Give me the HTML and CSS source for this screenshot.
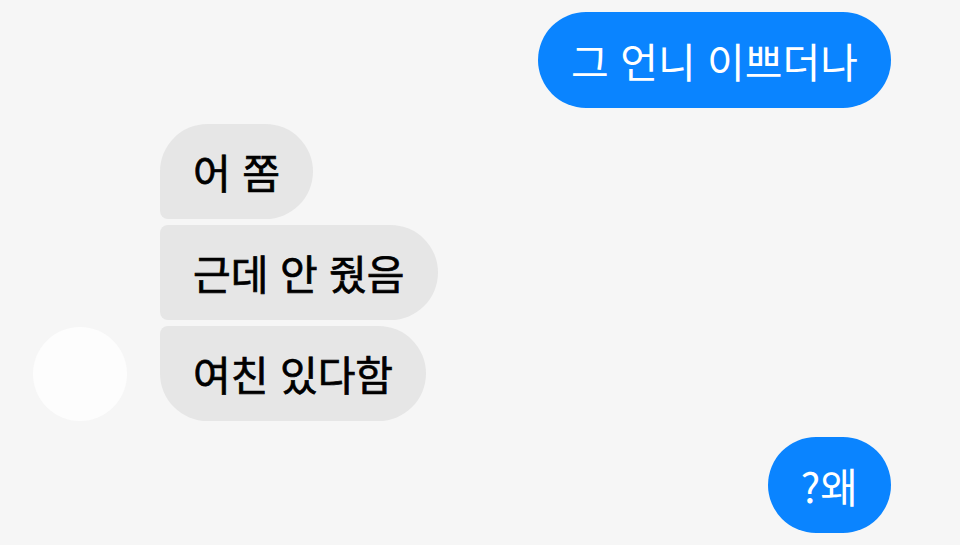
FILE: index.html
```html
<!DOCTYPE html>
<html lang="ko">
<head>
	<meta charset="UTF-8">
	<title>대화</title>
	<link rel="stylesheet" href="styles.css">
</head>
<body>
	<div class="chat">
		<!-- 내 메시지 -->
		<div class="row me">
			<div class="bubble blue">그 언니 이쁘더나</div>
		</div>
		<!-- 상대 메시지 -->
		<div class="row them">
			<div class="avatar"></div>
			<div class="stack">
				<div class="bubble gray first">어 쫌</div>
				<div class="bubble gray mid">근데 안 줬음</div>
				<div class="bubble gray last">여친 있다함</div>
			</div>
		</div>
		<div class="row me">
			<div class="bubble blue">?왜</div>
		</div>
	</div>
</body>
</html>
```
FILE: styles.css
```css
html,body{margin: 0;padding: 0;}
body{background: #f6f6f6;font-family: "Noto Sans CJK KR", "Noto Sans", sans-serif;width: 960px;height: 545px;overflow: hidden;}

.chat{display: flex;flex-direction: column;gap: 16px;padding: 12px 69px 0 33px;}
.row{display: flex;}
.row.me{justify-content: flex-end;}
.row.them{align-items: flex-end;gap: 33px;}

.avatar{width: 94px;height: 94px;border-radius: 50%;background: #fdfdfd;flex: none;}
.stack{display: flex;flex-direction: column;align-items: flex-start;gap: 6px;}

.bubble{height: 95px;box-sizing: border-box;padding: 0 33px;display: flex;align-items: center;font-size: 41px;line-height: 1;border-radius: 48px;white-space: nowrap;}
.bubble.blue{background: #0a84ff;color: #fff;height: 96px;}
.bubble.gray{background: #e6e6e6;color: #000;-webkit-text-stroke: 0.7px #000;}
.bubble.first{border-bottom-left-radius: 8px;}
.bubble.mid{border-top-left-radius: 8px;border-bottom-left-radius: 8px;}
.bubble.last{border-top-left-radius: 8px;}
```
